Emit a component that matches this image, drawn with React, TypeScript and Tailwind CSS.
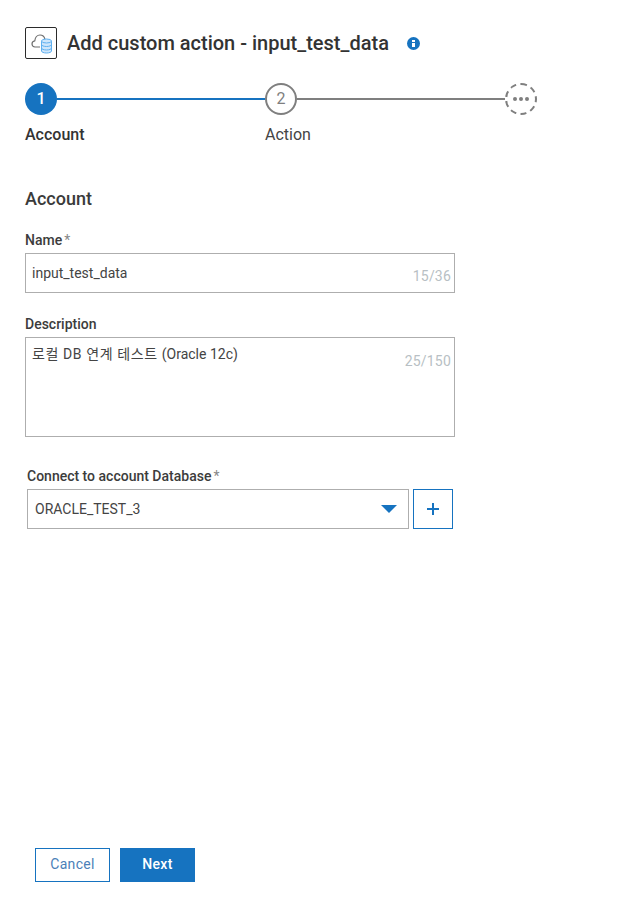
import React from "react";

const FONT = "font-['Roboto','Noto_Sans_CJK_KR',sans-serif]";

function ActionIcon() {
  return (
    <div className="flex h-8 w-8 items-center justify-center rounded-[2px] border border-[#2b2b2b] bg-white">
      <svg width="24" height="24" viewBox="0 0 24 24" fill="none">
        <path d="M11 16H6C4.2 16 3 14.6 3 13C3 11.3 4.2 10 5.8 9.8C6.1 6.7 8.2 4 11 4C13.4 4 15.3 5.6 15.9 8" stroke="#6e6e6e" strokeWidth="1.2" />
        <path d="M12.5 10V20C12.5 21.1 14.7 22 17.5 22C20.3 22 22.5 21.1 22.5 20V10Z" fill="#cfe6fb" stroke="#5fb0f0" strokeWidth="1" />
        <ellipse cx="17.5" cy="10" rx="5" ry="2" fill="#cfe6fb" stroke="#5fb0f0" strokeWidth="1" />
        <path d="M12.5 13.5C12.5 14.6 14.7 15.5 17.5 15.5C20.3 15.5 22.5 14.6 22.5 13.5M12.5 17C12.5 18.1 14.7 19 17.5 19C20.3 19 22.5 18.1 22.5 17" stroke="#5fb0f0" strokeWidth="1" />
      </svg>
    </div>
  );
}

function InfoIcon() {
  return (
    <span className="flex h-[13px] w-[13px] flex-col items-center justify-center gap-px rounded-full bg-[#1673c0]">
      <span className="h-[2px] w-[3px] bg-white" />
      <span className="h-1 w-[3px] bg-white" />
    </span>
  );
}

function Stepper() {
  return (
    <div className="w-[512px]">
      <div className="flex items-center">
        <div className="flex h-8 w-8 shrink-0 items-center justify-center rounded-full bg-[#1673c0] text-base font-medium text-white">1</div>
        <div className="h-[2px] w-[208px] bg-[#1673c0]" />
        <div className="flex h-8 w-8 shrink-0 items-center justify-center rounded-full border-2 border-[#7f7f7f] text-base text-[#7f7f7f]">2</div>
        <div className="h-[2px] w-[208px] bg-[#7f7f7f]" />
        <div className="flex h-8 w-8 shrink-0 items-center justify-center gap-[2px] rounded-full border-2 border-dashed border-[#7f7f7f]">
          <span className="h-1 w-1 rounded-full bg-[#7f7f7f]" />
          <span className="h-1 w-1 rounded-full bg-[#7f7f7f]" />
          <span className="h-1 w-1 rounded-full bg-[#7f7f7f]" />
        </div>
      </div>
      <div className="mt-[10px] flex text-base leading-[20px]">
        <div className="w-[240px] font-medium text-[#333]">Account</div>
        <div className="text-[#444]">Action</div>
      </div>
    </div>
  );
}

function Label({ text, required }: { text: string; required?: boolean }) {
  return (
    <div className="text-sm leading-[16px] font-medium text-[#3c3c3c]">
      {text}
      {required && <span className="ml-[2px] font-normal text-[#888]">*</span>}
    </div>
  );
}

export default function App() {
  return (
    <div className={`${FONT} relative h-[904px] w-[622px] bg-white`}>
      <div className="pt-[27px] pl-[25px]">
        <div className="flex items-center">
          <ActionIcon />
          <h1 className="ml-[10px] text-[20px] leading-8 font-medium text-[#333]">Add custom action - input_test_data</h1>
          <span className="ml-[18px]"><InfoIcon /></span>
        </div>
        <div className="mt-[24px]"><Stepper /></div>
        <h2 className="mt-[42px] text-[18px] leading-[24px] font-medium text-[#3a3a3a]">Account</h2>

        <div className="mt-[21px] w-[430px]">
          <Label text="Name" required />
          <div className="relative mt-[5px] h-10 border border-[#aeaeae] px-[6px] pt-[10px] text-sm leading-[18px] text-[#444]">
            input_test_data
            <span className="absolute right-[3px] bottom-[8px] text-sm leading-4 tracking-[0.2px] text-[#b8bfc4]">15/36</span>
          </div>
        </div>

        <div className="mt-[23px] w-[430px]">
          <Label text="Description" />
          <div className="relative mt-[5px] h-[100px] border border-[#aeaeae] px-[6px] pt-[7px] text-sm leading-[18px] text-[#444]">
            <span className="tracking-[0.6px]">로컬 DB 연계 테스트 </span>(Oracle 12c)
            <span className="absolute top-[15px] right-[3px] text-sm leading-4 tracking-[0.2px] text-[#b8bfc4]">25/150</span>
          </div>
        </div>

        <div className="mt-[31px] ml-[2px] w-[426px]">
          <Label text="Connect to account Database" required />
          <div className="mt-[5px] flex gap-1">
            <div className="flex h-10 w-[382px] items-center justify-between border border-[#aeaeae] pr-[11px] pl-[7px] text-sm text-[#444]">
              ORACLE_TEST_3
              <span className="h-0 w-0 border-x-[8px] border-t-[8px] border-x-transparent border-t-[#1673c0]" />
            </div>
            <div className="flex h-10 w-10 items-center justify-center border border-[#1673c0]">
              <svg width="14" height="14" viewBox="0 0 14 14"><path d="M7 1V13M1 7H13" stroke="#1673c0" strokeWidth="2" /></svg>
            </div>
          </div>
        </div>
      </div>

      <div className="absolute top-[848px] left-[35px] flex gap-[10px]">
        <button className="h-[34px] w-[75px] border border-[#1673c0] bg-white pb-[2px] text-sm tracking-[0.3px] text-[#4b7fb8]">Cancel</button>
        <button className="h-[34px] w-[75px] bg-[#1673c0] pb-[2px] text-sm font-medium tracking-[0.3px] text-white">Next</button>
      </div>
    </div>
  );
}
